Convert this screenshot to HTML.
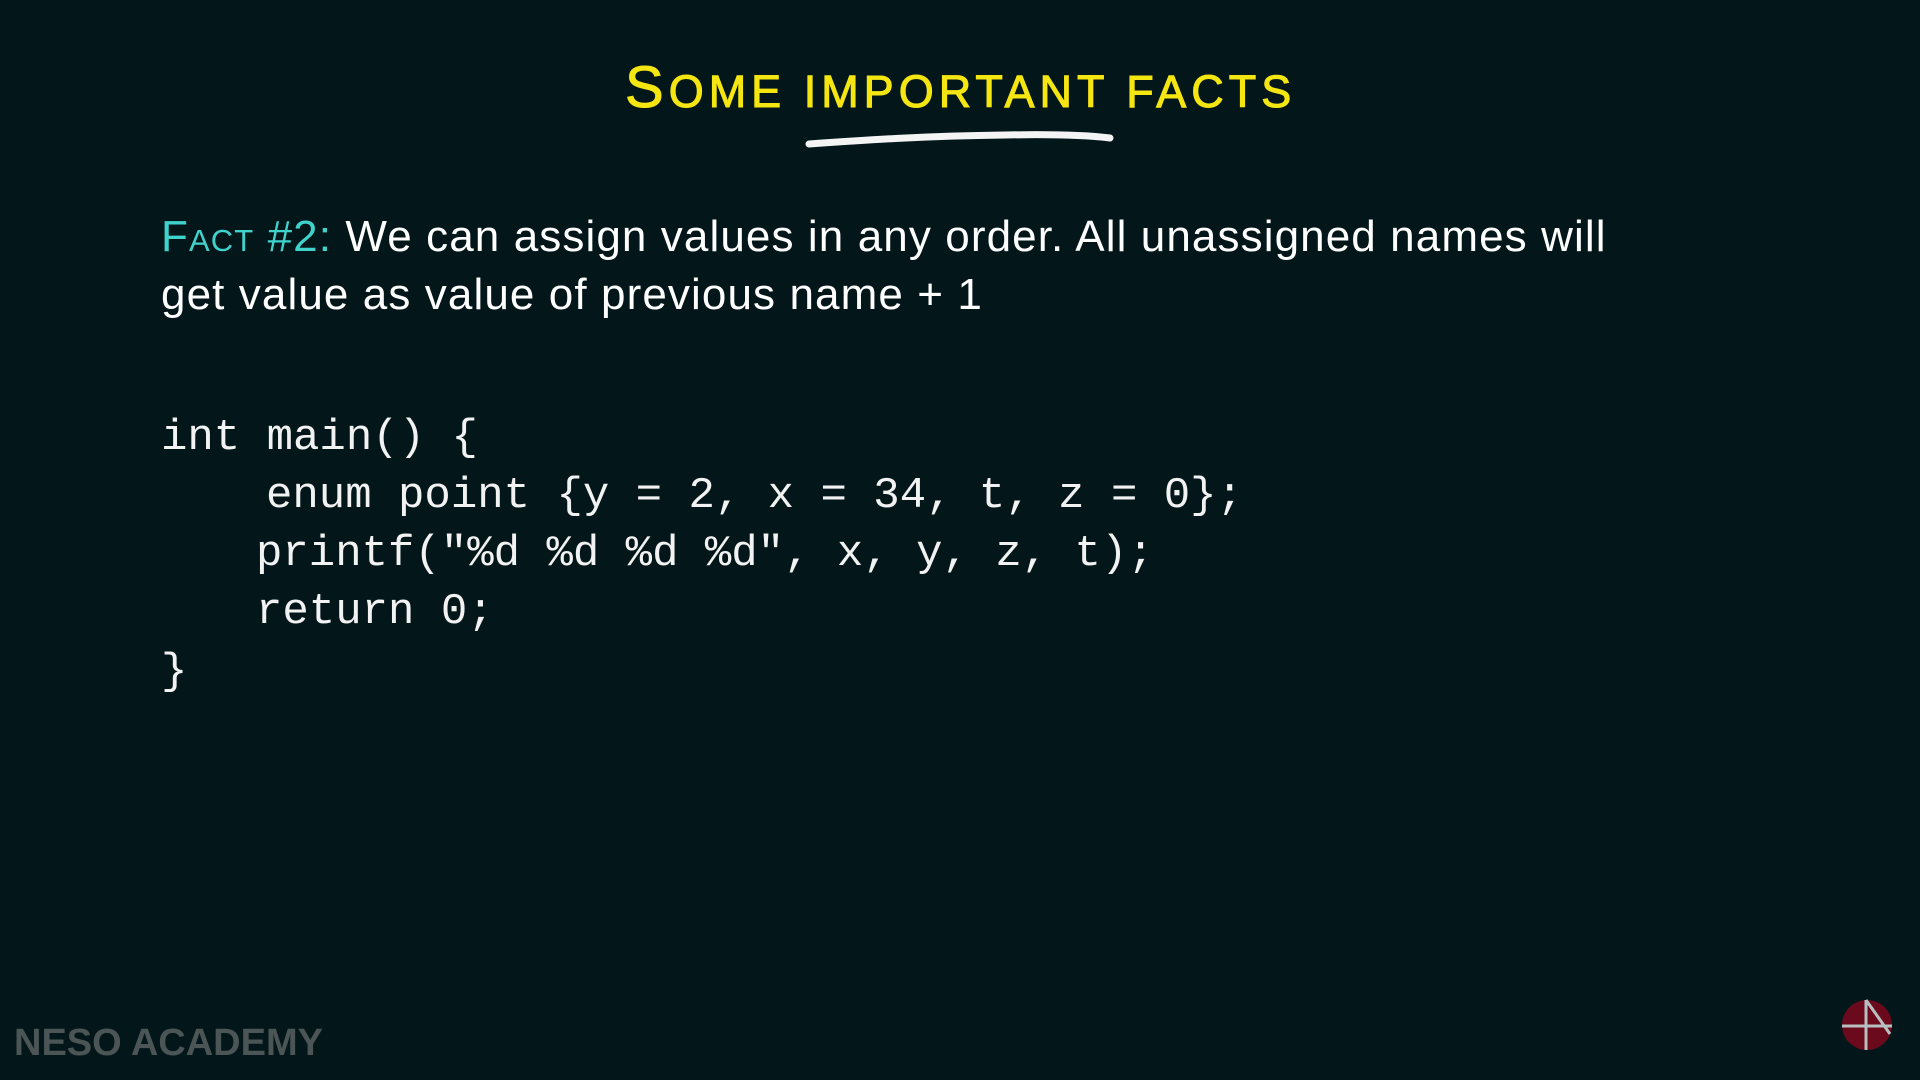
<!DOCTYPE html>
<html><head><meta charset="utf-8"><style>
html,body{margin:0;padding:0;}
body{width:1920px;height:1080px;background:#03171a;position:relative;overflow:hidden;font-family:"Liberation Sans",sans-serif;}
.t{position:absolute;white-space:pre;}
#title{left:625px;top:54px;color:#f5e612;font-size:45px;font-family:"Liberation Sans",sans-serif;letter-spacing:5px;-webkit-text-stroke:1px #f5e612;}
#title b{font-size:58px;font-weight:normal;}
.f{left:161px;color:#fff;font-size:44px;letter-spacing:1.1px;}
.code{font-family:"Liberation Mono",monospace;font-size:44px;color:#f2f2f2;left:0;}
#neso{left:14px;top:1022px;font-size:38px;color:#4b5556;font-weight:bold;}
</style></head><body>
<div class="t" id="title"><b>S</b>OME IMPORTANT FACTS</div>
<svg style="position:absolute;left:805px;top:128px" width="310" height="24">
<path d="M4 16 C60 12 120 8 200 7 C250 6 280 7 305 10" stroke="#f4f4f4" stroke-width="7" fill="none" stroke-linecap="round"/>
</svg>
<div class="t f" style="top:212px"><span style="color:#3fd3cc;font-variant:small-caps">Fact #2:</span> We can assign values in any order. All unassigned names will</div>
<div class="t f" style="top:270px">get value as value of previous name + 1</div>
<div class="t code" style="left:161px;top:413px">int main() {</div>
<div class="t code" style="left:266px;top:471px">enum point {y = 2, x = 34, t, z = 0};</div>
<div class="t code" style="left:256px;top:529px">printf("%d %d %d %d", x, y, z, t);</div>
<div class="t code" style="left:256px;top:587px">return 0;</div>
<div class="t code" style="left:161px;top:647px">}</div>
<div class="t" id="neso">NESO ACADEMY</div>
<svg style="position:absolute;left:1840px;top:998px" width="56" height="56">
<circle cx="27" cy="27" r="25" fill="#6a0a1c"/>
<path d="M26 2 V52 M2 28 H52 M26 2 L50 36" stroke="#b8bfc0" stroke-width="3" fill="none"/>
</svg>
</body></html>
